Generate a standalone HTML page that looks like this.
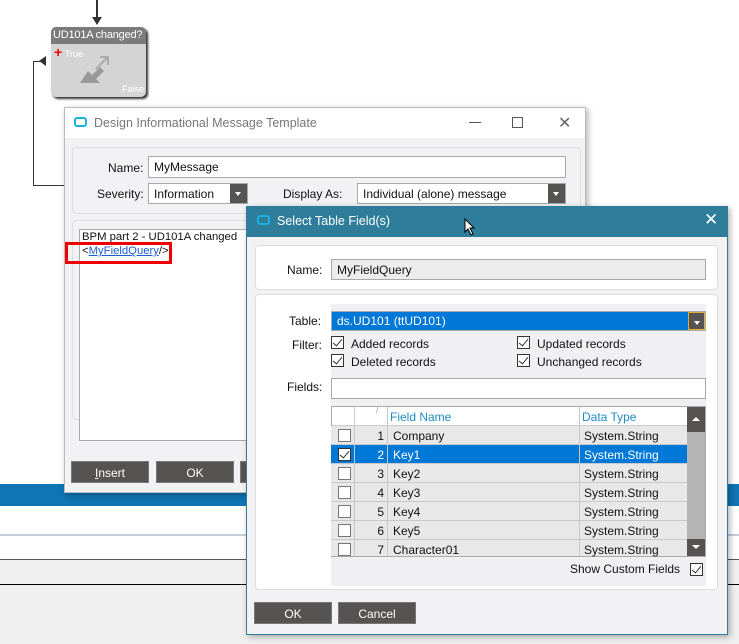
<!DOCTYPE html>
<html><head><style>
*{box-sizing:border-box;margin:0;padding:0}
body{width:739px;height:644px;background:#fff;font-family:"Liberation Sans",sans-serif;font-size:12px;color:#111;position:relative;overflow:hidden}
.a{position:absolute;white-space:nowrap}
.inp{position:absolute;background:#fff;border:1px solid #a8a8a8;padding:3px 0 0 5px;font-size:12px;white-space:nowrap}
.btn{position:absolute;background:#555452;color:#fff;text-align:center;font-size:12px;line-height:22px;border:1px solid #777}
.dd{position:absolute;background:#555452;width:17px;top:0;bottom:0;right:0}
.dd:after{content:"";position:absolute;left:5px;top:8px;border:3px solid transparent;border-top:4px solid #fff}
.cb{position:absolute;width:13px;height:13px;border:1px solid #333;background:#fff}
.cb.k:after{content:"";position:absolute;left:3px;top:0px;width:4px;height:8px;border:solid #333;border-width:0 1.5px 1.5px 0;transform:rotate(40deg)}
.row{position:absolute;left:331px;width:356px;height:19px;background:#e8e8e8;border-bottom:1px solid #c8c8c8}
.row span{position:absolute;top:3px;font-size:12px}
.row .n{left:24px;width:29px;text-align:right}
</style></head><body>
<div class="a" style="left:96px;top:0;width:2px;height:20px;background:#333"></div>
<div class="a" style="left:92px;top:17px;border:5px solid transparent;border-top:8px solid #333"></div>
<div class="a" style="left:51px;top:27px;width:95px;height:70px;background:#d4d4d4;border-radius:5px;box-shadow:2px 2px 2px #333"></div>
<div class="a" style="left:51px;top:27px;width:95px;height:17px;background:#7b7b7b;border-radius:5px 5px 0 0;color:#fff;font-size:11px;padding:2px 0 0 2px;letter-spacing:-0.2px">UD101A changed?</div>
<div class="a" style="left:54px;top:46px;color:#e00;font-weight:bold;font-size:14px;line-height:12px">+</div>
<div class="a" style="left:65px;top:49px;color:#fff;font-size:9px">True</div>
<div class="a" style="left:122px;top:84px;color:#fff;font-size:9px">False</div>
<svg class="a" style="left:78px;top:55px" width="40" height="32"><path d="M2 28 L10 16 L14 20 L22 12 L26 16 L18 24 L22 28Z" fill="#999"/><path d="M18 14 L30 2 M22 2 L30 2 L30 10" stroke="#aaa" stroke-width="2" fill="none"/></svg>
<div class="a" style="left:33px;top:61px;width:1px;height:125px;background:#333"></div>
<div class="a" style="left:33px;top:61px;width:8px;height:1px;background:#333"></div>
<div class="a" style="left:33px;top:185px;width:31px;height:1px;background:#333"></div>
<div class="a" style="left:39px;top:56px;border:5px solid transparent;border-right:7px solid #333;border-left:0"></div>
<div class="a" style="left:0;top:484px;width:739px;height:22px;background:#0f75b4"></div>
<div class="a" style="left:0;top:534px;width:739px;height:2px;background:#c8cbd8"></div>
<div class="a" style="left:0;top:559px;width:739px;height:1px;background:#555"></div>
<div class="a" style="left:0;top:560px;width:739px;height:24px;background:#efefef"></div>
<div class="a" style="left:0;top:584px;width:739px;height:60px;background:#f0f0f0;border-top:1px solid #000"></div>
<div class="a" style="left:64px;top:107px;width:522px;height:386px;background:#f2f2f4;border:1px solid #bbb;box-shadow:2px 2px 6px rgba(0,0,0,.3)">
 <div class="a" style="left:0;top:0;width:520px;height:30px;background:#fff"></div>
 <div class="a" style="left:9px;top:9px;width:13px;height:10px;border:2px solid #1ab0e0;border-radius:3px"></div>
 <div class="a" style="left:29px;top:8px;color:#777;font-size:12.5px">Design Informational Message Template</div>
 <div class="a" style="left:404px;top:14px;width:12px;height:1px;background:#555"></div>
 <div class="a" style="left:447px;top:9px;width:11px;height:11px;border:1px solid #555"></div>
 <div class="a" style="left:493px;top:5px;color:#666;font-size:16px">✕</div>
 <div class="a" style="left:7px;top:39px;width:509px;height:67px;border:1px solid #ddd;border-radius:4px;background:#f2f2f4"></div>
 <div class="a" style="left:43px;top:53px">Name:</div>
 <div class="inp" style="left:83px;top:48px;width:418px;height:22px">MyMessage</div>
 <div class="a" style="left:32px;top:79px">Severity:</div>
 <div class="inp" style="left:83px;top:75px;width:100px;height:21px">Information<div class="dd"></div></div>
 <div class="a" style="left:218px;top:79px">Display As:</div>
 <div class="inp" style="left:292px;top:75px;width:209px;height:21px">Individual (alone) message<div class="dd"></div></div>
 <div class="a" style="left:7px;top:112px;width:509px;height:200px;border:1px solid #ddd;border-radius:4px"></div>
 <div class="a" style="left:14px;top:121px;width:200px;height:212px;background:#fff;border:1px solid #aaa"></div>
 <div class="a" style="left:17px;top:123px;font-size:11.3px">BPM part 2 - UD101A changed</div>
 <div class="a" style="left:17px;top:137px;font-size:11.3px">&lt;<span style="color:#1a5fd0;text-decoration:underline">MyFieldQuery</span>/&gt;</div>
 <div class="a" style="left:0;top:134px;width:107px;height:22px;border:3px solid #e00"></div>
 <div class="btn" style="left:6px;top:353px;width:78px;height:22px"><u>I</u>nsert</div>
 <div class="btn" style="left:91px;top:353px;width:78px;height:22px">OK</div>
 <div class="btn" style="left:175px;top:353px;width:78px;height:22px"></div>
</div>
<div class="a" style="left:246px;top:206px;width:482px;height:429px;background:#f2f2f4;border:1px solid #2e7d9a;box-shadow:2px 2px 6px rgba(0,0,0,.3)"></div>
<div class="a" style="left:246px;top:206px;width:482px;height:31px;background:#2e7d9a"></div>
<div class="a" style="left:257px;top:215px;width:13px;height:10px;border:2px solid #1ab0e0;border-radius:3px"></div>
<div class="a" style="left:277px;top:214px;color:#fff;font-size:12.5px">Select Table Field(s)</div>
<div class="a" style="left:704px;top:210px;color:#fff;font-size:17px">✕</div>
<svg class="a" style="left:464px;top:218px" width="12" height="18"><path d="M1 1 L1 14 L4 11 L7 17 L9 16 L6 10 L10 10Z" fill="#fff" stroke="#000"/></svg>
<div class="a" style="left:255px;top:245px;width:463px;height:45px;background:#fff;border:1px solid #ddd;border-radius:4px"></div>
<div class="a" style="left:287px;top:263px">Name:</div>
<div class="inp" style="left:331px;top:259px;width:375px;height:21px;background:#ececec">MyFieldQuery</div>
<div class="a" style="left:255px;top:294px;width:463px;height:296px;background:#fff;border:1px solid #ddd;border-radius:4px"></div>
<div class="a" style="left:331px;top:304px;width:375px;height:282px;background:#f0f0f2"></div>
<div class="a" style="left:289px;top:314px">Table:</div>
<div class="inp" style="left:331px;top:311px;width:375px;height:20px;background:#0078d7;color:#fff;border-color:#aaa;padding-top:2px">ds.UD101 (ttUD101)<div class="dd" style="border:1px solid #e0b030"></div></div>
<div class="a" style="left:292px;top:338px">Filter:</div>
<div class="cb k" style="left:331px;top:336px"></div><div class="a" style="left:351px;top:337px">Added records</div>
<div class="cb k" style="left:517px;top:336px"></div><div class="a" style="left:537px;top:337px">Updated records</div>
<div class="cb k" style="left:331px;top:354px"></div><div class="a" style="left:351px;top:355px">Deleted records</div>
<div class="cb k" style="left:517px;top:354px"></div><div class="a" style="left:537px;top:355px">Unchanged records</div>
<div class="a" style="left:287px;top:380px">Fields:</div>
<div class="inp" style="left:331px;top:378px;width:375px;height:21px"></div>
<div class="a" style="left:331px;top:406px;width:375px;height:151px;background:#e8e8e8;border:1px solid #aaa"></div>
<div class="a" style="left:332px;top:407px;width:355px;height:19px;background:#fff;border-bottom:1px solid #ccc"></div>
<div class="a" style="left:390px;top:410px;color:#1e8cc0">Field Name</div>
<div class="a" style="left:582px;top:410px;color:#1e8cc0">Data Type</div>
<div class="a" style="left:376px;top:406px;color:#999;font-size:8px">/</div>
<div class="row" style="top:426px"><div class="cb" style="left:7px;top:3px;border-color:#777"></div><span class="n">1</span><span style="left:62px">Company</span><span style="left:253px">System.String</span></div>
<div class="row" style="top:445px;background:#0078d7;color:#fff"><div class="cb k" style="left:7px;top:3px"></div><span class="n" style="color:#fff">2</span><span style="left:62px;color:#fff">Key1</span><span style="left:253px;color:#fff">System.String</span></div>
<div class="row" style="top:464px"><div class="cb" style="left:7px;top:3px;border-color:#777"></div><span class="n">3</span><span style="left:62px">Key2</span><span style="left:253px">System.String</span></div>
<div class="row" style="top:483px"><div class="cb" style="left:7px;top:3px;border-color:#777"></div><span class="n">4</span><span style="left:62px">Key3</span><span style="left:253px">System.String</span></div>
<div class="row" style="top:502px"><div class="cb" style="left:7px;top:3px;border-color:#777"></div><span class="n">5</span><span style="left:62px">Key4</span><span style="left:253px">System.String</span></div>
<div class="row" style="top:521px"><div class="cb" style="left:7px;top:3px;border-color:#777"></div><span class="n">6</span><span style="left:62px">Key5</span><span style="left:253px">System.String</span></div>
<div class="row" style="top:540px;height:16px;border:0"><div class="cb" style="left:7px;top:3px;border-color:#777"></div><span class="n">7</span><span style="left:62px">Character01</span><span style="left:253px">System.String</span></div>
<div class="a" style="left:354px;top:407px;width:1px;height:149px;background:#c8c8c8"></div>
<div class="a" style="left:387px;top:407px;width:1px;height:149px;background:#c8c8c8"></div>
<div class="a" style="left:579px;top:407px;width:1px;height:149px;background:#c8c8c8"></div>
<div class="a" style="left:687px;top:407px;width:18px;height:149px;background:#b4b4b4"></div>
<div class="a" style="left:687px;top:407px;width:18px;height:25px;background:#555452"></div>
<div class="a" style="left:692px;top:413px;border:4px solid transparent;border-bottom:4px solid #fff"></div>
<div class="a" style="left:687px;top:539px;width:18px;height:17px;background:#555452"></div>
<div class="a" style="left:692px;top:545px;border:4px solid transparent;border-top:4px solid #fff"></div>
<div class="a" style="left:570px;top:562px">Show Custom Fields</div>
<div class="cb k" style="left:690px;top:563px"></div>
<div class="btn" style="left:254px;top:602px;width:78px;height:22px">OK</div>
<div class="btn" style="left:338px;top:602px;width:78px;height:22px">Cancel</div>
</body></html>
